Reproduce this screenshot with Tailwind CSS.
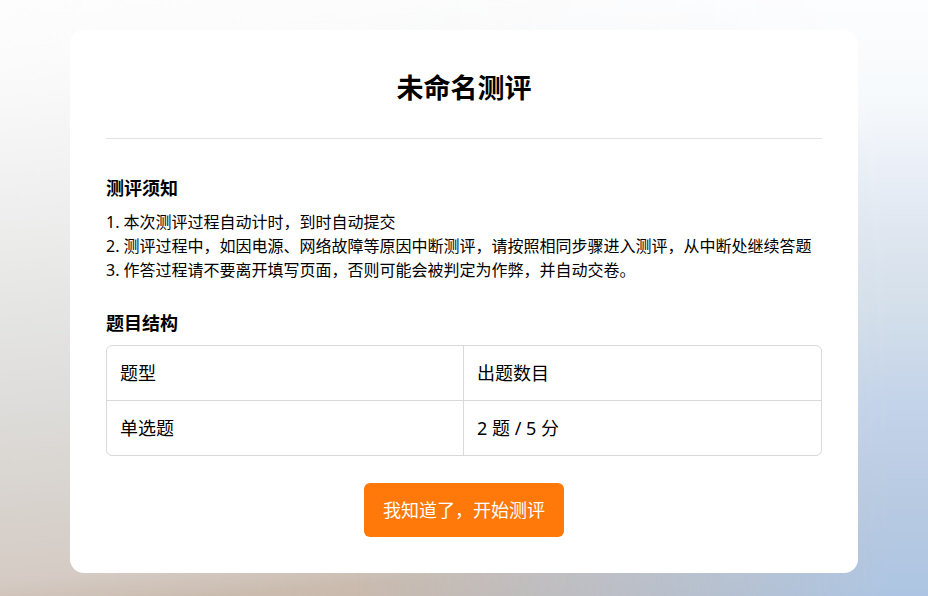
<!DOCTYPE html>
<html lang="zh-CN">
<head>
  <meta charset="UTF-8">
  <meta name="viewport" content="width=device-width, initial-scale=1.0">
  <title>未命名测评</title>
  <script src="https://cdn.jsdelivr.net/npm/@tailwindcss/browser@4"></script>
</head>
<body class="relative isolate min-h-screen bg-[#fdfdfd] px-4 pt-[30px] pb-[23px] font-['Noto_Sans','Noto_Sans_CJK_SC',sans-serif] text-lg text-black">
  <!-- Background: warm grey on the left, blue fading in on the right -->
  <div class="absolute inset-0 -z-10 bg-[linear-gradient(175deg,#fdfdfd_0%,#fbfbfb_9%,#f8f8f8_15%,#efefef_30%,#e6e6e4_44%,#dedddb_59%,#d8d3ce_74%,#d5cbc4_86%,#cabbae_91%,#c8b6aa_100%)]"></div>
  <div class="absolute inset-0 -z-10 bg-[linear-gradient(180deg,#fcfdff_0%,#f6f9fb_17%,#ebf0f8_27%,#dfe6f0_39%,#d3dfea_52%,#c3d3e9_68%,#b8cae2_84%,#adc5e2_100%)] mask-[linear-gradient(90deg,transparent_38%,black_96%)]"></div>

  <main class="mx-auto max-w-[788px] rounded-[14px] bg-white p-9">
    <h1 class="border-b border-[#e3e3e3] pb-7 text-center text-[27px] leading-[44px] font-bold">未命名测评</h1>

    <!-- Notes -->
    <section class="mt-9">
      <h2 class="mb-2 leading-[27px] font-bold">测评须知</h2>
      <div class="text-base leading-6">
        <p>1. 本次测评过程自动计时，到时自动提交</p>
        <p>2. 测评过程中，如因电源、网络故障等原因中断测评，请按照相同步骤进入测评，从中断处继续答题</p>
        <p>3. 作答过程请不要离开填写页面，否则可能会被判定为作弊，并自动交卷。</p>
      </div>
    </section>

    <!-- Question structure -->
    <section class="mt-7">
      <h2 id="structure" class="mb-2 leading-[27px] font-bold">题目结构</h2>
      <table aria-labelledby="structure" class="w-full table-fixed border-separate border-spacing-0 rounded-md border border-[#d9d9d9] text-left leading-[27px]">
        <thead>
          <tr>
            <th class="h-[55px] border-r border-b border-[#d9d9d9] px-[13px] font-normal">题型</th>
            <th class="h-[55px] border-b border-[#d9d9d9] px-[13px] font-normal">出题数目</th>
          </tr>
        </thead>
        <tbody>
          <tr>
            <td class="h-[54px] border-r border-[#d9d9d9] px-[13px]">单选题</td>
            <td class="h-[54px] px-[13px]">2 题 / 5 分</td>
          </tr>
        </tbody>
      </table>
    </section>

    <div class="mt-[27px] flex justify-center">
      <button type="button" class="h-[54px] w-[200px] cursor-pointer rounded-md bg-[#ff780a] leading-[27px] text-white">我知道了，开始测评</button>
    </div>
  </main>
</body>
</html>
